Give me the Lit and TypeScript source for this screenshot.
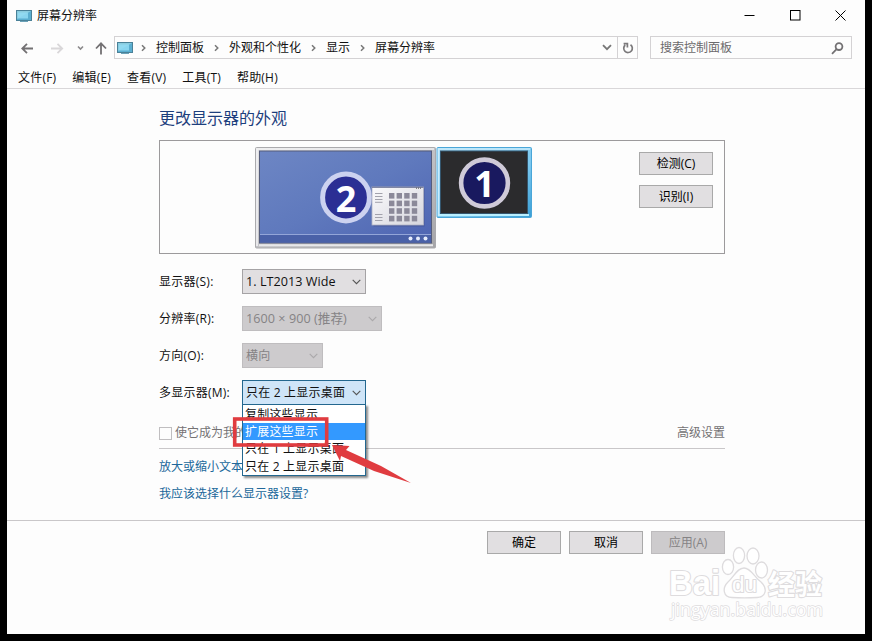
import { LitElement, html, css, svg, nothing } from "lit";
import { customElement, property } from "lit/decorators.js";

const base = css`
  * { box-sizing: border-box; }
  svg { display: block; flex: none; }
`;

const monitorIcon = html`<svg width="16" height="12" viewBox="0 0 16 12">
  <rect x="0.5" y="0.5" width="15" height="10" fill="#5aaed0" stroke="#4a8198"/>
  <path d="M1 1H15L1 9Z" fill="#8accdf"/>
  <rect x="2" y="2.5" width="10" height="6" fill="#92dcf5" opacity=".85"/>
  <path d="M4 11.5H12" stroke="#6ba2b8"/>
</svg>`;

@customElement("push-button")
export class PushButton extends LitElement {
  @property() label = "";
  @property({ type: Boolean }) disabled = false;
  static styles = [base, css`
    :host { display: block; width: 74px; height: 23px; }
    button { display: block; width: 100%; height: 100%; padding: 1px 0 0; border: 1px solid #a9a9a9; background: #e1dfe1;
      color: #000; font: inherit; }
    button:disabled { background: #cdcbcd; border-color: #bdbbbd; color: #858385; }
  `];
  render() {
    return html`<button ?disabled=${this.disabled}>${this.label}</button>`;
  }
}

@customElement("combo-box")
export class ComboBox extends LitElement {
  @property() value = "";
  @property({ type: Number }) width = 124;
  @property({ type: Boolean }) disabled = false;
  @property({ type: Boolean }) open = false;
  @property({ type: Number }) active = -1;
  @property({ attribute: false }) options: string[] = [];
  static styles = [base, css`
    :host { display: block; position: relative; letter-spacing: .2px; }
    .box { display: flex; align-items: center; justify-content: space-between; height: 25px; padding: 0 4px 0 3px;
      border: 1px solid #a5a3a5; background: #e1dfe1; white-space: pre; }
    .latin { font-size: 12.6px; letter-spacing: .05px; }
    .box.disabled { background: #cdcbcd; border-color: #bfbdbf; color: #858385; }
    .box.open { background: #cfe5f8; border-color: #23678f; }
    .menu { position: absolute; top: 24px; left: 0; width: 124px; border: 1px solid #23678f; background: #fff;
      padding: 1px 0 0; box-shadow: 2px 2px 2px rgba(0,0,0,.45); z-index: 2; }
    .item { height: 17.2px; line-height: 18px; padding-left: 2px; white-space: pre; }
    .item.active { background: #3399ff; color: #fff; }
  `];
  render() {
    const tone = this.disabled ? "#aaa8aa" : "#555";
    return html`
      <div class="box ${this.disabled ? "disabled" : ""} ${this.open ? "open" : ""}" style="width:${this.width}px">
        <span class=${/^\d/.test(this.value) ? "latin" : ""}>${this.value}</span>
        <svg width="9" height="6" viewBox="0 0 9 6"><path d="M0.7 0.8L4.5 4.7L8.3 0.8" fill="none" stroke=${tone} stroke-width="1.1"/></svg>
      </div>
      ${this.open ? html`<div class="menu">
        ${this.options.map((o, i) => html`<div class="item ${i === this.active ? "active" : ""}">${o}</div>`)}
      </div>` : nothing}`;
  }
}

@customElement("display-map")
export class DisplayMap extends LitElement {
  static styles = [base, css`
    :host { display: block; }
    .num { font: bold 36px "Noto Sans", "Open Sans", sans-serif; fill: #fff; text-anchor: middle; }
  `];
  render() {
    const cells = [0, 1, 2, 3].flatMap((r) => [0, 1, 2, 3].map((c) =>
      svg`<rect x=${134 + c * 7.6} y=${46 + r * 7.6} width="5.4" height="5.6" fill="#8b8999"/>`));
    return html`<svg width="278" height="102" viewBox="0 0 278 102">
      <defs>
        <linearGradient id="desk" x1="0" y1="0" x2="1" y2="1">
          <stop offset="0" stop-color="#6d86c4"/><stop offset=".5" stop-color="#5f79bd"/><stop offset="1" stop-color="#4e64b2"/>
        </linearGradient>
        <linearGradient id="frame" x1="0" y1="0" x2="1" y2="1">
          <stop offset="0" stop-color="#e2e2e4"/><stop offset=".5" stop-color="#c2c2c6"/><stop offset="1" stop-color="#a5a5a8"/>
        </linearGradient>
        <linearGradient id="glow" x1="0" y1="0" x2="1" y2="1">
          <stop offset="0" stop-color="#a9ddf8"/><stop offset=".6" stop-color="#7cc8ef"/><stop offset="1" stop-color="#3a9fd6"/>
        </linearGradient>
        <linearGradient id="pane" x1="0" y1="0" x2="1" y2="1">
          <stop offset="0" stop-color="#fafafc"/><stop offset="1" stop-color="#d5d5dd"/>
        </linearGradient>
      </defs>
      <rect x="0.5" y="0.5" width="180" height="100.5" rx="1" fill="url(#frame)" stroke="#aaaaad"/>
      <path d="M2 99V2H179" fill="none" stroke="#f2f2f4" stroke-width="1.6"/>
      <path d="M4 98.3H178" stroke="#e8e8ea" stroke-width="2"/>
      <rect x="4.5" y="4" width="172" height="92" fill="url(#desk)" stroke="#555d7c"/>
      <rect x="5" y="88" width="171" height="7.5" fill="#4a61a8"/>
      <path d="M5 87.5H176" stroke="#93a5d8"/>
      <circle cx="155.5" cy="91.6" r="2" fill="#e6ecfb"/><circle cx="163" cy="91.6" r="2" fill="#e6ecfb"/><circle cx="170.5" cy="91.6" r="2" fill="#e6ecfb"/>
      <circle cx="91" cy="50.5" r="23.4" fill="#2b2f94" stroke="#ccd2f0" stroke-width="5"/>
      <text class="num" x="91" y="65">2</text>
      <rect x="118.5" y="41.5" width="51" height="38" fill="#3c4a86" opacity=".5"/>
      <rect x="117" y="40" width="51.5" height="38" fill="url(#pane)" stroke="#b0b2c2" stroke-width=".8"/>
      <path d="M117 40.3H168.5" stroke="#60688c" stroke-width=".9"/>
      <path d="M161 41.2H167" stroke="#555" stroke-dasharray="1 1"/>
      <path d="M120 46.5H127.5M120 49.5H127.5M120 52.5H127.5M120 55.3H127.5M120 67.5H127.5M120 70.5H127.5M120 73.5H127.5" stroke="#a2a2ac" stroke-width="1"/>
      ${cells}
      <rect x="182" y="0.5" width="94.5" height="70" rx="1" fill="url(#glow)" stroke="#4aa6d8"/>
      <path d="M183.5 69V2H275" fill="none" stroke="#c9ecfc" stroke-width="1.5"/>
      <path d="M184 68H274" stroke="#baf0ff" stroke-width="2"/>
      <rect x="185.500" y="4" width="87" height="62.5" fill="#2b2b2d" stroke="#34566e"/>
      <circle cx="229.5" cy="36" r="23.4" fill="#19195f" stroke="#cfcad8" stroke-width="4.6"/>
      <text class="num" x="229.5" y="50">1</text>
    </svg>`;
  }
}

@customElement("app-root")
export class AppRoot extends LitElement {
  static styles = [base, css`
    :host { display: block; width: 872px; height: 641px; background: #000; position: relative; overflow: hidden;
      font: 12px/16px "Open Sans", "Noto Sans CJK SC", sans-serif; color: #111; }
    .window { margin-left: 7px; width: 858px; height: 634px; background: #fdfdfd; display: flex; flex-direction: column; }
    .title { height: 32px; display: flex; align-items: center; padding: 0 19px 1px 9px; }
    .title span { margin: 1px 0 0 5px; flex: 1; }
    .controls { display: flex; gap: 34.5px; }
    .nav { height: 28px; display: flex; align-items: center; padding: 4px 13px 1px 14px; }
    .arrows { width: 93px; }
    .address { width: 524px; height: 23px; border: 1px solid #d4d2d4; display: flex; align-items: center; padding-left: 2px; }
    .crumbs { flex: 1; display: flex; align-items: center; padding: 0 0 0 8px; gap: 10px; }
    .refresh { width: 20px; height: 21px; border-left: 1px solid #d4d2d4; margin-left: 5px; display: grid; place-items: center; }
    .search { width: 202px; height: 23px; margin-left: 12px; border: 1px solid #d4d2d4; color: #6c6a6c; display: flex;
      align-items: center; justify-content: space-between; padding: 1px 7px 0 9px; }
    .menubar { height: 29px; border-bottom: 1px solid #d9d7d9; display: flex; gap: 16px; padding: 10px 0 0 11px; letter-spacing: .2px; }
    .content { flex: none; width: 566px; height: 431px; margin-left: 152px; padding-top: 18px; }
    h1 { margin: 0; font-size: 16px; line-height: 22px; font-weight: 400; color: #1d3f7d; height: 33px; }
    .preview { height: 114px; border: 1px solid #9c9a9c; display: flex; justify-content: space-between; padding: 6px 11px 0 95px; margin-bottom: 15px; }
    .side { display: flex; flex-direction: column; gap: 10px; padding-top: 5px; }
    .row { display: flex; align-items: center; height: 25px; margin-bottom: 12px; }
    .row label { width: 83px; letter-spacing: .25px; }
    .main { height: 44px; border-bottom: 1px solid #c9c7c9; display: flex; color: #747274; margin: -12px 0 10px; padding-top: 20px; }
    .check { width: 13px; height: 13px; border: 1px solid #c0bec0; margin: 2px 3px 0 0; }
    .main span { flex: 1; }
    .link { color: #20679a; height: 27px; }
    .footer { border-top: 1px solid #c9c7c9; display: flex; gap: 8px; padding: 10px 0 0 480px; }
    .mark { position: absolute; left: 231px; top: 415px; z-index: 5; }
    .watermark { position: absolute; left: 660px; top: 542px; }
    .wm { fill: #fff; stroke: #dedcde; stroke-width: 2.2px; paint-order: stroke; stroke-linejoin: round; }
    .brand { font: bold 35px "Liberation Sans", sans-serif; }
    .du { font: 22px "Liberation Sans", sans-serif; }
    .cn { font: bold 28px "Noto Sans CJK SC", sans-serif; }
    .url { font: 18.5px "Open Sans", sans-serif; stroke-width: 1.5px; }
  `];

  render() {
    const crumbs = ["控制面板", "外观和个性化", "显示", "屏幕分辨率"];
    return html`
      <div class="window">
        <div class="title">${monitorIcon}<span>屏幕分辨率</span>
          <div class="controls">
            <svg width="11" height="11"><path d="M.5 5.5H10.5" stroke="#000"/></svg>
            <svg width="11" height="11"><rect x=".5" y=".5" width="9.5" height="9.5" fill="none" stroke="#000"/></svg>
            <svg width="11" height="11"><path d="M.5 .5L10.5 10.5M10.5 .5L.5 10.5" stroke="#000"/></svg>
          </div>
        </div>
        <div class="nav">
          <svg class="arrows" height="14" viewBox="0 0 93 14" fill="none" stroke-width="1.8">
            <path d="M12 7.5H1.3M6 2.8L1.2 7.5L6 12.2" stroke="#737173"/>
            <path d="M30 7.5H41M36.5 2.8L41.2 7.5L36.5 12.2" stroke="#d9d7d9"/>
            <path d="M57 5.5L59.5 8L62 5.500" stroke="#8b898b" stroke-width="1.6"/>
            <path d="M80 13.5V2.5M75 7.5L80 2.3L85 7.5" stroke="#737173"/>
          </svg>
          <div class="address">${monitorIcon}
            <div class="crumbs">${crumbs.map((c) => html`
              <svg width="5" height="8" viewBox="0 0 5 8"><path d="M1 1.2L3.8 4L1 6.8" fill="none" stroke="#777" stroke-width="1.5"/></svg>
              <span>${c}</span>`)}</div>
            <svg width="10" height="7" viewBox="0 0 10 7"><path d="M1 1.2L5 5.2L9 1.2" fill="none" stroke="#777" stroke-width="1.8"/></svg>
            <div class="refresh"><svg width="12" height="12" viewBox="0 0 12 12" fill="none" stroke="#7b797b" stroke-width="1.7">
              <path d="M8.5 2.7A4.3 4.3 0 1 1 3.2 3M1.6 1.6H5.4V5.4"/></svg></div>
          </div>
          <div class="search"><span>搜索控制面板</span>
            <svg width="13" height="13" viewBox="0 0 13 13" fill="none" stroke="#737173" stroke-width="1.8"><circle cx="8" cy="4.6" r="3.4"/><path d="M5.6 7.2L1 11.8"/></svg>
          </div>
        </div>
        <div class="menubar">${["文件(F)", "编辑(E)", "查看(V)", "工具(T)", "帮助(H)"].map((m) => html`<span>${m}</span>`)}</div>
        <div class="content">
          <h1>更改显示器的外观</h1>
          <div class="preview">
            <display-map></display-map>
            <div class="side"><push-button label="检测(C)"></push-button><push-button label="识别(I)"></push-button></div>
          </div>
          <div class="row"><label>显示器(S):</label><combo-box .value=${"1. LT2013 Wide"}></combo-box></div>
          <div class="row"><label>分辨率(R):</label><combo-box disabled .width=${140} .value=${"1600 × 900 (推荐)"}></combo-box></div>
          <div class="row"><label>方向(O):</label><combo-box disabled .width=${81} .value=${"横向"}></combo-box></div>
          <div class="row"><label>多显示器(M):</label><combo-box open .active=${1} .value=${"只在 2 上显示桌面"}
            .options=${["复制这些显示", "扩展这些显示", "只在 1 上显示桌面", "只在 2 上显示桌面"]}></combo-box></div>
          <div class="main"><div class="check"></div><span>使它成为我的</span>高级设置</div>
          <div class="link">放大或缩小文本</div>
          <div class="link">我应该选择什么显示器设置?</div>
        </div>
        <div class="footer">
          <push-button label="确定"></push-button><push-button label="取消"></push-button><push-button label="应用(A)" disabled></push-button>
        </div>
      </div>
      <svg class="mark" width="184" height="72" viewBox="0 0 184 72">
        <rect x="3.7" y="4" width="92" height="26" fill="none" stroke="#e03c40" stroke-width="3.6"/>
        <path d="M101 30L118.5 31L115 35L150 51L180 68L143 56L110 41L109 46Z" fill="#e03c40"/>
      </svg>
      <svg class="watermark" width="170" height="85" viewBox="0 0 170 85">
        <text class="wm brand" x="9" y="53" textLength="51" lengthAdjust="spacingAndGlyphs">Bai</text>
        <g fill="#fff" stroke="#dedcde" stroke-width="1.3">
          <path d="M84 26C91 26 94 35 101 40C108 47 106 55 97 55.500C90 56 79 56 72 55.500C63 55 62 46 68 40C74 35 77 26 84 26Z"/>
          <ellipse cx="68" cy="25" rx="5.6" ry="7.5"/><ellipse cx="79" cy="13.5" rx="5.6" ry="8"/>
          <ellipse cx="93" cy="14" rx="6" ry="8"/><ellipse cx="101.5" cy="28" rx="6" ry="8"/>
        </g>
        <text class="wm du" x="72" y="50" textLength="25" lengthAdjust="spacingAndGlyphs">du</text>
        <text class="wm cn" x="108" y="53" textLength="54" lengthAdjust="spacingAndGlyphs">经验</text>
        <text class="wm url" x="11" y="74" textLength="152" lengthAdjust="spacingAndGlyphs">jingyan.baidu.com</text>
      </svg>`;
  }
}
